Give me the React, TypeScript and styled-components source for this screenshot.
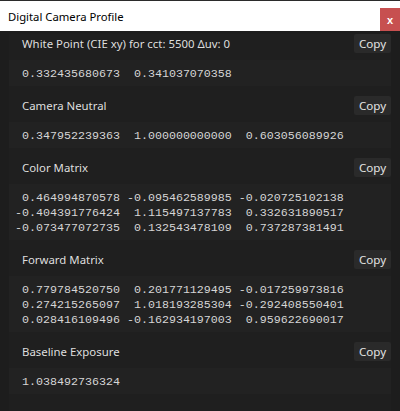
import React from "react";
import styled, { createGlobalStyle } from "styled-components";

const Global = createGlobalStyle`
  html, body { margin: 0; padding: 0; background: #1d1d1d; }
  body { width: 400px; height: 411px; overflow: hidden; }
  * { box-sizing: border-box; }
`;

const Window = styled.div`
  width: 400px;
  height: 411px;
  display: flex;
  flex-direction: column;
  background: #1d1d1d;
  border-top: 1px solid #2b2b2b;
`;

const TitleBar = styled.div`
  height: 30px;
  background: #ffffff;
  display: flex;
  align-items: center;
  justify-content: space-between;
  padding-left: 8px;
`;

const Title = styled.span`
  font-family: "Noto Sans", "Open Sans", sans-serif;
  font-size: 11.3px;
  color: #000;
`;

const CloseButton = styled.div`
  width: 20px;
  height: 23px;
  margin-top: 7px;
  align-self: flex-start;
  background: #c75050;
  color: #fff;
  font-family: "Liberation Sans", sans-serif;
  font-weight: bold;
  font-size: 11px;
  display: flex;
  align-items: center;
  justify-content: center;
`;

const Body = styled.div`
  flex: 1;
  padding: 3px 9px 0 9px;
  display: flex;
  flex-direction: column;
`;

const Panel = styled.div`
  flex: 1;
  background: #1f1f1f;
  display: flex;
  flex-direction: column;
`;

const Section = styled.section`
  display: flex;
  flex-direction: column;
  margin-bottom: 10px;
`;

const HeaderRow = styled.div`
  height: 19px;
  display: flex;
  align-items: center;
  justify-content: space-between;
  padding-left: 13px;
`;

const Label = styled.span`
  font-family: "Noto Sans", "Open Sans", sans-serif;
  font-size: 11.4px;
  color: #dedede;
`;

const CopyButton = styled.button`
  width: 37px;
  height: 19px;
  border: none;
  border-radius: 2px;
  background: #2a2a2a;
  color: #e2e2e2;
  font-family: "Noto Sans", "Open Sans", sans-serif;
  font-size: 11.6px;
  padding: 0;
  display: flex;
  align-items: center;
  justify-content: center;
`;

const ValueBox = styled.pre`
  margin: 7px 0 0 0;
  padding: 7px 0 4px 6px;
  background: #222222;
  font-family: "Liberation Mono", "Courier New", monospace;
  font-size: 11.67px;
  line-height: 15px;
  color: #d6d6d6;
  white-space: pre;
`;

type Item = { label: string; lines: string[] };

const items: Item[] = [
  {
    label: "White Point (CIE xy) for cct: 5500 \u0394uv: 0",
    lines: [" 0.332435680673  0.341037070358"],
  },
  {
    label: "Camera Neutral",
    lines: [" 0.347952239363  1.000000000000  0.603056089926"],
  },
  {
    label: "Color Matrix",
    lines: [
      " 0.464994870578 -0.095462589985 -0.020725102138",
      "-0.404391776424  1.115497137783  0.332631890517",
      "-0.073477072735  0.132543478109  0.737287381491",
    ],
  },
  {
    label: "Forward Matrix",
    lines: [
      " 0.779784520750  0.201771129495 -0.017259973816",
      " 0.274215265097  1.018193285304 -0.292408550401",
      " 0.028416109496 -0.162934197003  0.959622690017",
    ],
  },
  {
    label: "Baseline Exposure",
    lines: [" 1.038492736324"],
  },
];

export default function App() {
  return (
    <>
      <Global />
      <Window>
        <TitleBar>
          <Title>Digital Camera Profile</Title>
          <CloseButton>x</CloseButton>
        </TitleBar>
        <Body>
          <Panel>
            {items.map((it) => (
              <Section key={it.label}>
                <HeaderRow>
                  <Label>{it.label}</Label>
                  <CopyButton>Copy</CopyButton>
                </HeaderRow>
                <ValueBox>{it.lines.join("\n")}</ValueBox>
              </Section>
            ))}
          </Panel>
        </Body>
      </Window>
    </>
  );
}
